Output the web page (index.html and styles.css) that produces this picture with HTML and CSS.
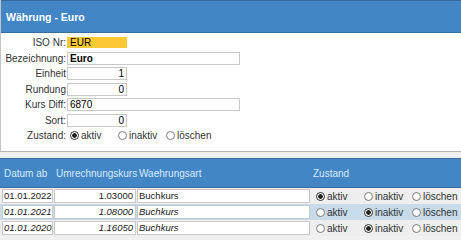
FILE: index.html
```html
<!DOCTYPE html>
<html lang="de">
<head>
<meta charset="utf-8">
<title>Währung - Euro</title>
<link rel="stylesheet" href="styles.css">
</head>
<body>
<div class="form-panel">
  <div class="title">Währung - Euro</div>
  <div class="fields">
    <div class="label">ISO Nr:</div><div><span class="input short iso">EUR</span></div>
    <div class="label">Bezeichnung:</div><div><span class="input long bold">Euro</span></div>
    <div class="label">Einheit</div><div><span class="input short num">1</span></div>
    <div class="label">Rundung</div><div><span class="input short num">0</span></div>
    <div class="label">Kurs Diff:</div><div><span class="input long">6870</span></div>
    <div class="label">Sort:</div><div><span class="input short num">0</span></div>
    <div class="label">Zustand:</div>
    <div class="radios">
      <span class="radio"><span class="dot on"></span>aktiv</span>
      <span class="radio"><span class="dot"></span>inaktiv</span>
      <span class="radio"><span class="dot"></span>löschen</span>
    </div>
  </div>
</div>
<div class="table-panel">
  <div class="thead">
    <div>Datum ab</div><div>Umrechnungskurs</div><div>Waehrungsart</div><div>Zustand</div>
  </div>
  <div class="row">
    <span class="cell">01.01.2022</span><span class="cell num">1.03000</span><span class="cell">Buchkurs</span>
    <div class="radios"><span class="radio"><span class="dot on"></span>aktiv</span><span class="radio"><span class="dot"></span>inaktiv</span><span class="radio"><span class="dot"></span>löschen</span></div>
  </div>
  <div class="row sel inactive">
    <span class="cell">01.01.2021</span><span class="cell num">1.08000</span><span class="cell">Buchkurs</span>
    <div class="radios"><span class="radio"><span class="dot"></span>aktiv</span><span class="radio"><span class="dot on"></span>inaktiv</span><span class="radio"><span class="dot"></span>löschen</span></div>
  </div>
  <div class="row inactive">
    <span class="cell">01.01.2020</span><span class="cell num">1.16050</span><span class="cell">Buchkurs</span>
    <div class="radios"><span class="radio"><span class="dot"></span>aktiv</span><span class="radio"><span class="dot on"></span>inaktiv</span><span class="radio"><span class="dot"></span>löschen</span></div>
  </div>
</div>
</body>
</html>
```
FILE: styles.css
```css
html, body {
  margin: 0;
  padding: 0;
}
body {
  width: 461px;
  height: 240px;
  overflow: hidden;
  background: #f0f0f0;
  font-family: "Liberation Sans", Arial, sans-serif;
  font-size: 10px;
  color: #333;
}
.form-panel {
  background: #fff;
  border-left: 1px solid #c4c4c4;
  border-bottom: 1px solid #b4b4b4;
  height: 152px;
  box-sizing: border-box;
}
.title {
  height: 33px;
  box-sizing: border-box;
  background: #4286c6;
  border-top: 1px solid #36689b;
  border-bottom: 1px solid #3b6c9e;
  color: #fff;
  font-weight: bold;
  font-size: 10.5px;
  padding-left: 5px;
  display: flex;
  align-items: center;
}
.fields {
  display: grid;
  grid-template-columns: 66px auto;
  grid-auto-rows: 15.5px;
  align-items: center;
  padding-top: 2px;
}
.label {
  text-align: right;
  padding-right: 1px;
  color: #333;
}
.input {
  display: block;
  height: 13px;
  line-height: 11px;
  box-sizing: border-box;
  border: 1px solid #c8c8c8;
  background: #fff;
  padding: 0 2px;
  color: #000;
}
.short { width: 60px; }
.long { width: 173px; }
.num { text-align: right; }
.bold { font-weight: bold; }
.iso {
  background: #fcc934;
  border-color: #fcc934;
  height: 11px;
  line-height: 10px;
}
.radios {
  display: flex;
  align-items: center;
  padding-left: 3px;
}
.radio {
  display: inline-flex;
  align-items: center;
  width: 48px;
  color: #333;
}
.dot {
  width: 9px;
  height: 9px;
  box-sizing: border-box;
  border: 1px solid #7a7a7a;
  border-radius: 50%;
  background: #fff;
  margin-right: 2px;
}
.dot.on {
  border-color: #333;
  background: radial-gradient(circle, #222 0 2px, #fff 2.6px);
}
.table-panel {
  margin-top: 6px;
}
.thead {
  height: 30px;
  box-sizing: border-box;
  background: #4286c6;
  border-top: 1px solid #3b6c9e;
  border-bottom: 1px solid #3b6c9e;
  color: #d8eafb;
  display: grid;
  grid-template-columns: 52px 83px 174px 1fr;
  align-items: center;
  padding-left: 2px;
}
.thead > div {
  padding-left: 2px;
}
.row {
  display: grid;
  grid-template-columns: 52px 83px 174px 1fr;
  align-items: center;
  height: 16px;
  padding-left: 2px;
  background: #eeeeee;
}
.row.sel { background: #c8dbeb; }
.cell {
  display: block;
  height: 14px;
  line-height: 12px;
  box-sizing: border-box;
  border: 1px solid #c8c8c8;
  background: #fff;
  padding: 0 0 0 1px;
  margin-right: 1px;
  color: #222;
  font-size: 9.5px;
  white-space: nowrap;
  overflow: hidden;
}
.cell.num { padding: 0 2px 0 0; }
.inactive .cell { font-style: italic; }
.row .radios { padding-left: 5px; }
```
